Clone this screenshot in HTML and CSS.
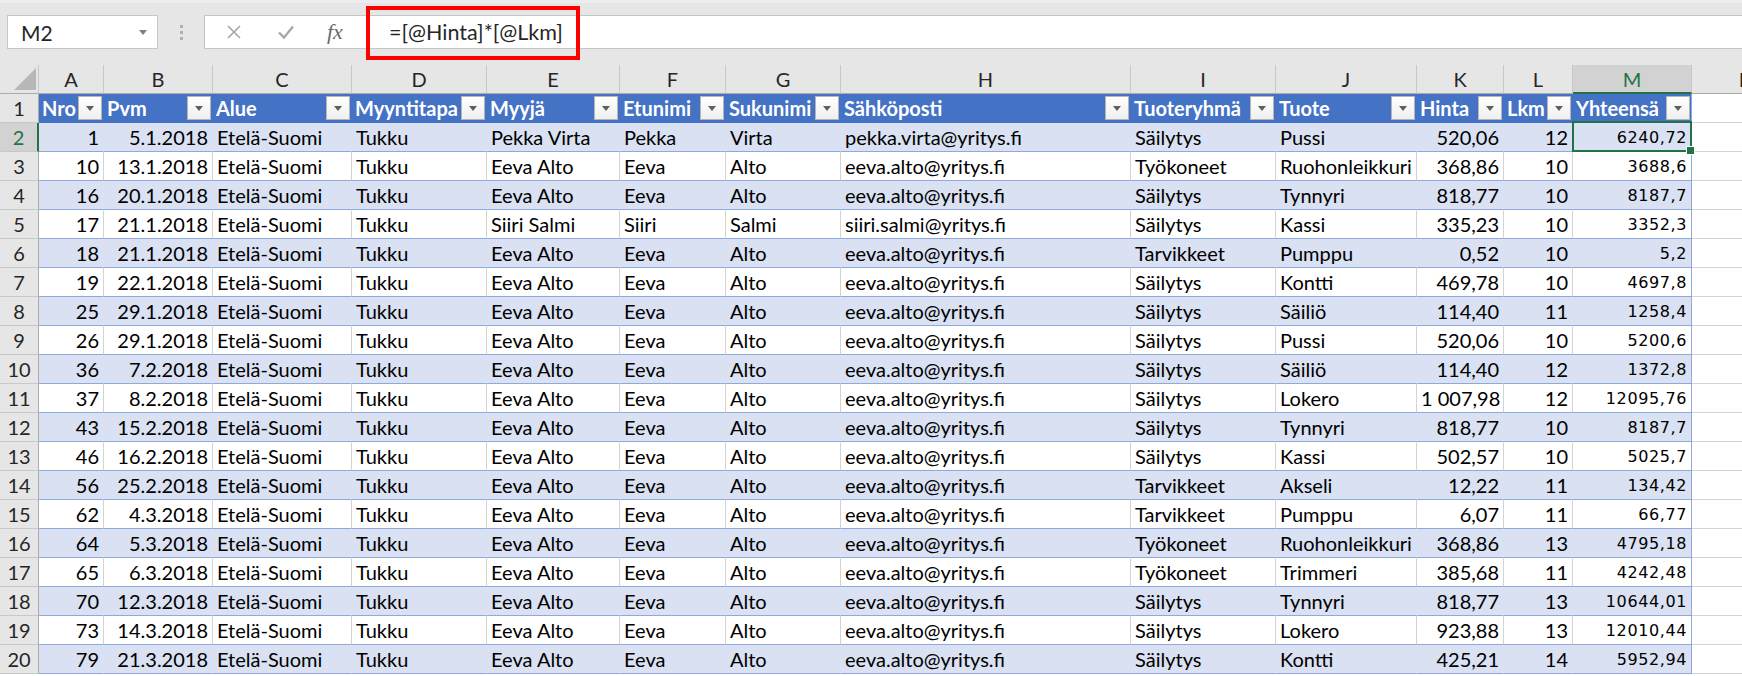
FILE: index.html
```
<!DOCTYPE html>
<html lang="fi">
<head>
    <meta charset="UTF-8">
    <title>Myynnit - Excel</title>
    <link rel="stylesheet" href="styles.css">
</head>
<body>

    <div class="topbar">
        <div class="namebox">
            <span>M2</span>
            <svg class="nb-arrow" width="8" height="5" viewBox="0 0 8 5"><polygon points="0,0 8,0 4,5" fill="#7f7f7f"/></svg>
        </div>
        <div class="grip"><i></i><i></i><i></i></div>
        <div class="fbar">
            <div class="fbtns">
                <svg width="16" height="16" viewBox="0 0 16 16"><path d="M2 2 L14 14 M14 2 L2 14" stroke="#a6a6a6" stroke-width="1.6"/></svg>
                <svg width="18" height="16" viewBox="0 0 18 16"><path d="M2 8.5 L7 13.5 L16 2.5" stroke="#a6a6a6" stroke-width="2.2" fill="none"/></svg>
                <span class="fx">fx</span>
            </div>
            <div class="finput">=[@Hinta]*[@Lkm]</div>
        </div>
        <!-- annotation box around the formula -->
        <div class="mark"></div>
    </div>

    <table class="sheet">
        <colgroup>
            <col style="width:39px"><col style="width:65px"><col style="width:109px"><col style="width:139px">
            <col style="width:135px"><col style="width:133px"><col style="width:106px"><col style="width:115px">
            <col style="width:290px"><col style="width:145px"><col style="width:141px"><col style="width:87px">
            <col style="width:69px"><col style="width:119px"><col style="width:110px">
        </colgroup>
        <tr class="letters">
            <th class="corner"><svg width="22" height="22" viewBox="0 0 22 22"><polygon points="22,0 22,22 0,22" fill="#b7b7b7"/></svg></th>
            <th>A</th><th>B</th><th>C</th><th>D</th><th>E</th><th>F</th><th>G</th><th>H</th><th>I</th><th>J</th><th>K</th><th>L</th><th class="sel">M</th><th>N</th>
        </tr>
        <tr class="head">
            <th class="rh">1</th>
            <td><div class="hc"><span>Nro</span><b class="dd"></b></div></td>
            <td><div class="hc"><span>Pvm</span><b class="dd"></b></div></td>
            <td><div class="hc"><span>Alue</span><b class="dd"></b></div></td>
            <td><div class="hc"><span>Myyntitapa</span><b class="dd"></b></div></td>
            <td><div class="hc"><span>Myyjä</span><b class="dd"></b></div></td>
            <td><div class="hc"><span>Etunimi</span><b class="dd"></b></div></td>
            <td><div class="hc"><span>Sukunimi</span><b class="dd"></b></div></td>
            <td><div class="hc"><span>Sähköposti</span><b class="dd"></b></div></td>
            <td><div class="hc"><span>Tuoteryhmä</span><b class="dd"></b></div></td>
            <td><div class="hc"><span>Tuote</span><b class="dd"></b></div></td>
            <td><div class="hc"><span>Hinta</span><b class="dd"></b></div></td>
            <td><div class="hc"><span>Lkm</span><b class="dd"></b></div></td>
            <td class="last"><div class="hc"><span>Yhteensä</span><b class="dd"></b></div></td>
            <td class="blank"></td>
        </tr>
        <tr class="band">
            <th class="rh sel">2</th>
            <td class="num">1</td><td class="num">5.1.2018</td><td>Etelä-Suomi</td><td>Tukku</td><td>Pekka Virta</td><td>Pekka</td><td>Virta</td><td>pekka.virta@yritys.fi</td><td>Säilytys</td><td>Pussi</td><td class="num">520,06</td><td class="num">12</td><td class="num tot last active">6240,72</td><td class="blank"></td>
        </tr>
        <tr>
            <th class="rh">3</th>
            <td class="num">10</td><td class="num">13.1.2018</td><td>Etelä-Suomi</td><td>Tukku</td><td>Eeva Alto</td><td>Eeva</td><td>Alto</td><td>eeva.alto@yritys.fi</td><td>Työkoneet</td><td>Ruohonleikkuri</td><td class="num">368,86</td><td class="num">10</td><td class="num tot last">3688,6</td><td class="blank"></td>
        </tr>
        <tr class="band">
            <th class="rh">4</th>
            <td class="num">16</td><td class="num">20.1.2018</td><td>Etelä-Suomi</td><td>Tukku</td><td>Eeva Alto</td><td>Eeva</td><td>Alto</td><td>eeva.alto@yritys.fi</td><td>Säilytys</td><td>Tynnyri</td><td class="num">818,77</td><td class="num">10</td><td class="num tot last">8187,7</td><td class="blank"></td>
        </tr>
        <tr>
            <th class="rh">5</th>
            <td class="num">17</td><td class="num">21.1.2018</td><td>Etelä-Suomi</td><td>Tukku</td><td>Siiri Salmi</td><td>Siiri</td><td>Salmi</td><td>siiri.salmi@yritys.fi</td><td>Säilytys</td><td>Kassi</td><td class="num">335,23</td><td class="num">10</td><td class="num tot last">3352,3</td><td class="blank"></td>
        </tr>
        <tr class="band">
            <th class="rh">6</th>
            <td class="num">18</td><td class="num">21.1.2018</td><td>Etelä-Suomi</td><td>Tukku</td><td>Eeva Alto</td><td>Eeva</td><td>Alto</td><td>eeva.alto@yritys.fi</td><td>Tarvikkeet</td><td>Pumppu</td><td class="num">0,52</td><td class="num">10</td><td class="num tot last">5,2</td><td class="blank"></td>
        </tr>
        <tr>
            <th class="rh">7</th>
            <td class="num">19</td><td class="num">22.1.2018</td><td>Etelä-Suomi</td><td>Tukku</td><td>Eeva Alto</td><td>Eeva</td><td>Alto</td><td>eeva.alto@yritys.fi</td><td>Säilytys</td><td>Kontti</td><td class="num">469,78</td><td class="num">10</td><td class="num tot last">4697,8</td><td class="blank"></td>
        </tr>
        <tr class="band">
            <th class="rh">8</th>
            <td class="num">25</td><td class="num">29.1.2018</td><td>Etelä-Suomi</td><td>Tukku</td><td>Eeva Alto</td><td>Eeva</td><td>Alto</td><td>eeva.alto@yritys.fi</td><td>Säilytys</td><td>Säiliö</td><td class="num">114,40</td><td class="num">11</td><td class="num tot last">1258,4</td><td class="blank"></td>
        </tr>
        <tr>
            <th class="rh">9</th>
            <td class="num">26</td><td class="num">29.1.2018</td><td>Etelä-Suomi</td><td>Tukku</td><td>Eeva Alto</td><td>Eeva</td><td>Alto</td><td>eeva.alto@yritys.fi</td><td>Säilytys</td><td>Pussi</td><td class="num">520,06</td><td class="num">10</td><td class="num tot last">5200,6</td><td class="blank"></td>
        </tr>
        <tr class="band">
            <th class="rh">10</th>
            <td class="num">36</td><td class="num">7.2.2018</td><td>Etelä-Suomi</td><td>Tukku</td><td>Eeva Alto</td><td>Eeva</td><td>Alto</td><td>eeva.alto@yritys.fi</td><td>Säilytys</td><td>Säiliö</td><td class="num">114,40</td><td class="num">12</td><td class="num tot last">1372,8</td><td class="blank"></td>
        </tr>
        <tr>
            <th class="rh">11</th>
            <td class="num">37</td><td class="num">8.2.2018</td><td>Etelä-Suomi</td><td>Tukku</td><td>Eeva Alto</td><td>Eeva</td><td>Alto</td><td>eeva.alto@yritys.fi</td><td>Säilytys</td><td>Lokero</td><td class="num">1 007,98</td><td class="num">12</td><td class="num tot last">12095,76</td><td class="blank"></td>
        </tr>
        <tr class="band">
            <th class="rh">12</th>
            <td class="num">43</td><td class="num">15.2.2018</td><td>Etelä-Suomi</td><td>Tukku</td><td>Eeva Alto</td><td>Eeva</td><td>Alto</td><td>eeva.alto@yritys.fi</td><td>Säilytys</td><td>Tynnyri</td><td class="num">818,77</td><td class="num">10</td><td class="num tot last">8187,7</td><td class="blank"></td>
        </tr>
        <tr>
            <th class="rh">13</th>
            <td class="num">46</td><td class="num">16.2.2018</td><td>Etelä-Suomi</td><td>Tukku</td><td>Eeva Alto</td><td>Eeva</td><td>Alto</td><td>eeva.alto@yritys.fi</td><td>Säilytys</td><td>Kassi</td><td class="num">502,57</td><td class="num">10</td><td class="num tot last">5025,7</td><td class="blank"></td>
        </tr>
        <tr class="band">
            <th class="rh">14</th>
            <td class="num">56</td><td class="num">25.2.2018</td><td>Etelä-Suomi</td><td>Tukku</td><td>Eeva Alto</td><td>Eeva</td><td>Alto</td><td>eeva.alto@yritys.fi</td><td>Tarvikkeet</td><td>Akseli</td><td class="num">12,22</td><td class="num">11</td><td class="num tot last">134,42</td><td class="blank"></td>
        </tr>
        <tr>
            <th class="rh">15</th>
            <td class="num">62</td><td class="num">4.3.2018</td><td>Etelä-Suomi</td><td>Tukku</td><td>Eeva Alto</td><td>Eeva</td><td>Alto</td><td>eeva.alto@yritys.fi</td><td>Tarvikkeet</td><td>Pumppu</td><td class="num">6,07</td><td class="num">11</td><td class="num tot last">66,77</td><td class="blank"></td>
        </tr>
        <tr class="band">
            <th class="rh">16</th>
            <td class="num">64</td><td class="num">5.3.2018</td><td>Etelä-Suomi</td><td>Tukku</td><td>Eeva Alto</td><td>Eeva</td><td>Alto</td><td>eeva.alto@yritys.fi</td><td>Työkoneet</td><td>Ruohonleikkuri</td><td class="num">368,86</td><td class="num">13</td><td class="num tot last">4795,18</td><td class="blank"></td>
        </tr>
        <tr>
            <th class="rh">17</th>
            <td class="num">65</td><td class="num">6.3.2018</td><td>Etelä-Suomi</td><td>Tukku</td><td>Eeva Alto</td><td>Eeva</td><td>Alto</td><td>eeva.alto@yritys.fi</td><td>Työkoneet</td><td>Trimmeri</td><td class="num">385,68</td><td class="num">11</td><td class="num tot last">4242,48</td><td class="blank"></td>
        </tr>
        <tr class="band">
            <th class="rh">18</th>
            <td class="num">70</td><td class="num">12.3.2018</td><td>Etelä-Suomi</td><td>Tukku</td><td>Eeva Alto</td><td>Eeva</td><td>Alto</td><td>eeva.alto@yritys.fi</td><td>Säilytys</td><td>Tynnyri</td><td class="num">818,77</td><td class="num">13</td><td class="num tot last">10644,01</td><td class="blank"></td>
        </tr>
        <tr>
            <th class="rh">19</th>
            <td class="num">73</td><td class="num">14.3.2018</td><td>Etelä-Suomi</td><td>Tukku</td><td>Eeva Alto</td><td>Eeva</td><td>Alto</td><td>eeva.alto@yritys.fi</td><td>Säilytys</td><td>Lokero</td><td class="num">923,88</td><td class="num">13</td><td class="num tot last">12010,44</td><td class="blank"></td>
        </tr>
        <tr class="band">
            <th class="rh">20</th>
            <td class="num">79</td><td class="num">21.3.2018</td><td>Etelä-Suomi</td><td>Tukku</td><td>Eeva Alto</td><td>Eeva</td><td>Alto</td><td>eeva.alto@yritys.fi</td><td>Säilytys</td><td>Kontti</td><td class="num">425,21</td><td class="num">14</td><td class="num tot last">5952,94</td><td class="blank"></td>
        </tr>
    </table>

</body>
</html>
```

FILE: styles.css
```
* {
    box-sizing: border-box;
    margin: 0;
    padding: 0;
}
html, body {
    overflow: hidden;
}
body {
    font-family: Lato, "Open Sans", sans-serif;
    font-size: 20px;
    color: #000;
    background: #fff;
    width: 1742px;
}

/* formula bar strip */
.topbar {
    position: relative;
    height: 65px;
    background: #e6e6e6;
    border-top: 3px solid #ececec;
    display: flex;
    align-items: flex-start;
    padding: 12px 0 0 7px;
}
.namebox {
    width: 151px;
    height: 34px;
    background: #fff;
    border: 1px solid #c6c6c6;
    display: flex;
    align-items: center;
    justify-content: space-between;
    padding: 0 10px 0 13px;
    font-size: 21px;
    color: #262626;
}
.grip {
    width: 46px;
    height: 34px;
    display: flex;
    flex-direction: column;
    align-items: center;
    justify-content: center;
    gap: 3px;
}
.grip i {
    display: block;
    width: 3px;
    height: 3px;
    background: #b0b0b0;
}
.fbar {
    flex: 1;
    height: 34px;
    background: #fff;
    border: 1px solid #c6c6c6;
    border-right: none;
    display: flex;
    align-items: center;
}
.fbtns {
    width: 165px;
    height: 100%;
    display: flex;
    align-items: center;
    padding-left: 21px;
    gap: 35px;
}
.fx {
    font-family: "Liberation Serif", serif;
    font-style: italic;
    font-size: 22px;
    color: #6a6a6a;
    margin-left: -3px;
}
.finput {
    flex: 1;
    padding-left: 19px;
    font-size: 21.5px;
    color: #262626;
}
.mark {
    position: absolute;
    left: 366px;
    top: 3px;
    width: 214px;
    height: 54px;
    border: 4px solid #ff0000;
}

/* grid */
.sheet {
    table-layout: fixed;
    width: 1801px;
    border-collapse: separate;
    border-spacing: 0;
}
.sheet th, .sheet td {
    height: 29px;
    white-space: nowrap;
    overflow: hidden;
    font-weight: normal;
    vertical-align: bottom;
    line-height: 1.2;
    padding: 0 4px 2px 4px;
}
.sheet .letters th {
    height: 29px;
    overflow: visible;
    background: #e6e6e6;
    color: #262626;
    font-size: 20px;
    text-align: center;
    border-right: 1px solid #c8c8c8;
    border-bottom: 1px solid #ababab;
}
.letters th.corner {
    padding: 0 0 3px 14px;
    text-align: left;
}
.letters th.corner svg {
    display: block;
}
.sheet .letters th.sel {
    background: #d2d2d2;
    color: #217346;
    border-bottom: 2px solid #217346;
    padding-bottom: 1px;
}
.sheet .rh {
    background: #e6e6e6;
    color: #262626;
    text-align: center;
    border-right: 1px solid #ababab;
    border-bottom: 1px solid #c8c8c8;
    padding-left: 0;
    padding-right: 0;
}
.sheet .rh.sel {
    background: #d2d2d2;
    color: #217346;
    border-right: 2px solid #217346;
}

/* body rows */
.sheet td {
    background: #fff;
    border-right: 1px solid #d4d4d4;
    border-bottom: 1px solid #8ea9db;
}
.sheet .band td {
    background: #d9e1f2;
    border-right-color: transparent;
}
.sheet td.num {
    text-align: right;
}
.sheet td.tot {
    font-family: "DejaVu Sans", sans-serif;
    font-size: 16px;
    letter-spacing: 0.6px;
    padding-bottom: 4px;
}
.sheet td.last, .sheet .band td.last {
    border-right: 1px solid #8ea9db;
}

/* table header row */
.sheet .head td {
    background: #4472c4;
    color: #fff;
    font-weight: bold;
    padding: 0 1px 0 3px;
    vertical-align: middle;
    border-right-color: #4472c4;
    border-bottom-color: #4472c4;
}
.sheet .head td.last {
    border-right: 1px solid #8ea9db;
}
.hc {
    display: flex;
    align-items: center;
    justify-content: space-between;
}
.hc span {
    overflow: hidden;
    line-height: 1.25;
    padding-top: 1px;
}
.dd {
    flex-shrink: 0;
    position: relative;
    width: 24px;
    height: 24px;
    background: linear-gradient(#ffffff, #efefef);
    border: 1px solid #b5b5b5;
}
.dd::after {
    content: "";
    position: absolute;
    left: 7px;
    top: 9px;
    border-left: 4px solid transparent;
    border-right: 4px solid transparent;
    border-top: 5px solid #5f5f5f;
}

/* empty column right of the table */
.sheet td.blank, .sheet .band td.blank, .sheet .head td.blank {
    background: #fff;
    border-right: 1px solid #d4d4d4;
    border-bottom: 1px solid #d4d4d4;
}

/* active cell */
.sheet td.active {
    position: relative;
    overflow: visible;
}
.sheet td.active::before {
    content: "";
    position: absolute;
    left: -1px;
    top: -2px;
    right: -1px;
    bottom: -1px;
    border: 2px solid #217346;
}
.sheet td.active::after {
    content: "";
    position: absolute;
    right: -4px;
    bottom: -4px;
    width: 7px;
    height: 7px;
    background: #217346;
    border: 1px solid #fff;
}
```
